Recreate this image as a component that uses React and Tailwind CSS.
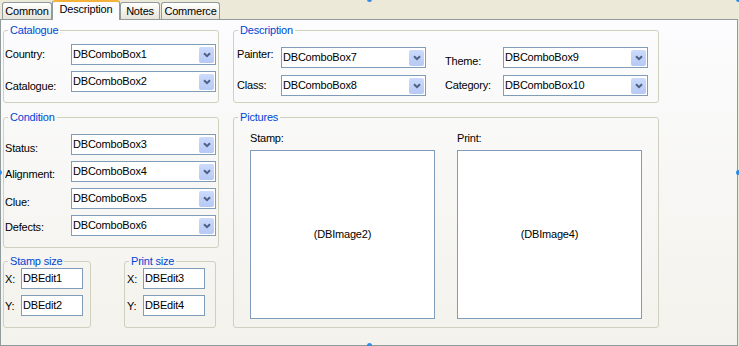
import React from "react";

function Group({ title, className = "", children }) {
  return (
    <fieldset className={`rounded-[3px] border border-[#D0D0BF] ${className}`}>
      <legend className="ml-[4px] px-[2px] leading-[13px] text-[#0046D5]">{title}</legend>
      {children}
    </fieldset>
  );
}

function Combo({ text }) {
  return (
    <div className="flex h-[21px] w-[145px] shrink-0 items-center border border-[#7F9DB9] bg-white">
      <span className="flex-1 pl-[1px] leading-[13px]">{text}</span>
      <span className="mr-[1px] mt-[1px] flex h-[16px] w-[15px] items-center justify-center rounded-[2px] bg-gradient-to-b from-[#CCDAFD] to-[#B6C9F5]">
        <svg width="8" height="6" viewBox="0 0 8 6">
          <path d="M1 1.2 L4 4.2 L7 1.2" fill="none" stroke="#4D6185" strokeWidth="2" />
        </svg>
      </span>
    </div>
  );
}

function Edit({ text }) {
  return (
    <div className="flex h-[21px] w-[62px] shrink-0 items-center border border-[#7F9DB9] bg-white pl-[1px] leading-[13px]">
      {text}
    </div>
  );
}

function Tab({ label, width, selected }) {
  if (selected) {
    return (
      <div
        className={`relative z-10 -mb-[1px] h-[20px] ${width} rounded-t-[3px] border-x border-t-2 border-x-[#919B9C] border-t-[#F5B23A] bg-[#FCFCFE] text-center leading-[13px]`}
      >
        <span className="relative top-[1px]">{label}</span>
      </div>
    );
  }
  return (
    <div
      className={`h-[17px] ${width} rounded-t-[3px] border-x border-t border-[#919B9C] bg-gradient-to-b from-white to-[#E6E4DA] pt-[2px] text-center leading-[13px]`}
    >
      {label}
    </div>
  );
}

function Dot({ className }) {
  return <span className={`absolute h-[5px] w-[5px] rounded-full bg-[#2F8BE6] ${className}`} />;
}

export default function App() {
  return (
    <div className="relative h-[346px] w-[739px] overflow-hidden bg-[#ECE9D8] font-['Liberation_Sans',Arial,sans-serif] text-[11px] tracking-[-0.2px] text-black">
      {/* Tabs */}
      <div className="flex h-[19px] items-end pl-[2px]">
        <Tab label="Common" width="w-[50px]" />
        <Tab label="Description" width="w-[68px]" selected />
        <Tab label="Notes" width="w-[40px]" />
        <div className="w-[1px]" />
        <Tab label="Commerce" width="w-[59px]" />
      </div>

      {/* Page */}
      <div className="flex h-[327px] w-[738px] border border-[#919B9C] bg-gradient-to-b from-[#FCFCFE] to-[#F3F2EC] pl-[2px]">
        {/* Left column */}
        <div className="flex w-[216px] flex-col">
          <Group title="Catalogue" className="mt-[4px] h-[79px]">
            <div className="mt-[7px] flex">
              <span className="mt-[4px] w-[67px] pl-[1px] leading-[13px]">Country:</span>
              <Combo text="DBComboBox1" />
            </div>
            <div className="mt-[6px] flex">
              <span className="mt-[9px] w-[67px] pl-[1px] leading-[13px]">Catalogue:</span>
              <Combo text="DBComboBox2" />
            </div>
          </Group>

          <Group title="Condition" className="mt-[8px] h-[137px]">
            {[
              ["Status:", "DBComboBox3", "mt-[10px]", "mt-[8px]"],
              ["Alignment:", "DBComboBox4", "mt-[6px]", "mt-[7px]"],
              ["Clue:", "DBComboBox5", "mt-[6px]", "mt-[8px]"],
              ["Defects:", "DBComboBox6", "mt-[6px]", "mt-[6px]"],
            ].map(([label, text, rowMt, labelMt]) => (
              <div key={text} className={`${rowMt} flex`}>
                <span className={`${labelMt} w-[67px] pl-[1px] leading-[13px]`}>{label}</span>
                <Combo text={text} />
              </div>
            ))}
          </Group>

          <div className="mt-[7px] flex gap-[33px]">
            <Group title="Stamp size" className="h-[73px] w-[88px]">
              <div className="flex">
                <span className="mt-[5px] w-[17px] pl-[1px] leading-[13px]">X:</span>
                <Edit text="DBEdit1" />
              </div>
              <div className="mt-[6px] flex">
                <span className="mt-[5px] w-[17px] pl-[1px] leading-[13px]">Y:</span>
                <Edit text="DBEdit2" />
              </div>
            </Group>
            <Group title="Print size" className="h-[73px] w-[92px]">
              <div className="flex">
                <span className="mt-[5px] w-[18px] pl-[2px] leading-[13px]">X:</span>
                <Edit text="DBEdit3" />
              </div>
              <div className="mt-[6px] flex">
                <span className="mt-[5px] w-[18px] pl-[2px] leading-[13px]">Y:</span>
                <Edit text="DBEdit4" />
              </div>
            </Group>
          </div>
        </div>

        {/* Right column */}
        <div className="ml-[14px] flex w-[426px] flex-col">
          <Group title="Description" className="mt-[4px] h-[79px]">
            <div className="mt-[10px] flex">
              <span className="mt-[1px] w-[47px] pl-[3px] leading-[13px]">Painter:</span>
              <Combo text="DBComboBox7" />
              <span className="ml-[19px] mt-[8px] w-[58px] leading-[13px]">Theme:</span>
              <Combo text="DBComboBox9" />
            </div>
            <div className="mt-[7px] flex">
              <span className="mt-[4px] w-[47px] pl-[3px] leading-[13px]">Class:</span>
              <Combo text="DBComboBox8" />
              <span className="ml-[19px] mt-[4px] w-[58px] leading-[13px]">Category:</span>
              <Combo text="DBComboBox10" />
            </div>
          </Group>

          <Group title="Pictures" className="mt-[8px] h-[217px]">
            <div className="flex gap-[22px] pl-[16px]">
              {[
                ["Stamp:", "(DBImage2)"],
                ["Print:", "(DBImage4)"],
              ].map(([label, name]) => (
                <div key={name} className="flex flex-col">
                  <span className="mt-[8px] leading-[13px]">{label}</span>
                  <div className="mt-[5px] flex h-[169px] w-[185px] items-center justify-center border border-[#7F9DB9] bg-white">
                    {name}
                  </div>
                </div>
              ))}
            </div>
          </Group>
        </div>
      </div>

      {/* designer selection handles */}
      <Dot className="left-[367px] top-[-3px]" />
      <Dot className="left-[736px] top-[-3px]" />
      <Dot className="left-[-3px] top-[170px]" />
      <Dot className="left-[736px] top-[170px]" />
      <Dot className="left-[367px] top-[343px]" />
    </div>
  );
}
